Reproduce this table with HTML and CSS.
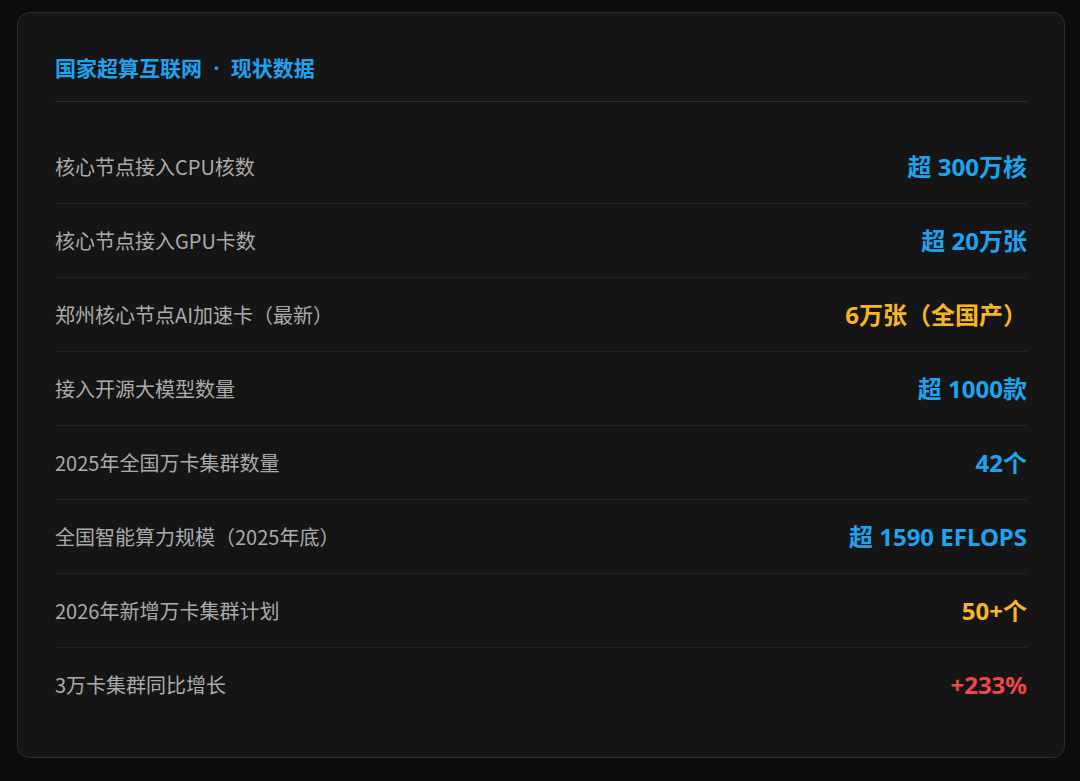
FILE: index.html
```html
<!DOCTYPE html>
<html lang="zh-CN">
<head>
<meta charset="utf-8">
<title>国家超算互联网 · 现状数据</title>
<link rel="stylesheet" href="styles.css">
</head>
<body>
<div class="card">
  <div class="header">
    <h2 class="title">国家超算互联网 · 现状数据</h2>
  </div>
  <ul class="list">
    <li class="row"><span class="label">核心节点接入CPU核数</span><span class="value blue">超 300万核</span></li>
    <li class="row"><span class="label">核心节点接入GPU卡数</span><span class="value blue">超 20万张</span></li>
    <li class="row"><span class="label">郑州核心节点AI加速卡（最新）</span><span class="value gold">6万张（全国产）</span></li>
    <li class="row"><span class="label">接入开源大模型数量</span><span class="value blue">超 1000款</span></li>
    <li class="row"><span class="label">2025年全国万卡集群数量</span><span class="value blue">42个</span></li>
    <li class="row"><span class="label">全国智能算力规模（2025年底）</span><span class="value blue">超 1590 EFLOPS</span></li>
    <li class="row"><span class="label">2026年新增万卡集群计划</span><span class="value gold">50+个</span></li>
    <li class="row"><span class="label">3万卡集群同比增长</span><span class="value red">+233%</span></li>
  </ul>
</div>
</body>
</html>
```
FILE: styles.css
```css
html, body {
  margin: 0;
  background: #0c0c0c;
}
body {
  padding: 12px 15px 22px 17px;
  font-family: "Noto Sans CJK SC", "Noto Sans", sans-serif;
}
.card {
  box-sizing: border-box;
  width: 1048px;
  background: #151515;
  border: 1px solid #2c2c2c;
  border-radius: 12px;
  padding: 36px 37px 36px 37px;
}
.header {
  padding: 4px 0 18px;
  border-bottom: 1px solid #173447;
}
.title {
  margin: 0;
  font-family: "Noto Sans", "Noto Sans CJK SC", sans-serif;
  font-size: 21px;
  line-height: 30px;
  font-weight: 700;
  color: #1ea3ef;
  word-spacing: 6px;
}
.list {
  list-style: none;
  margin: 28px 0 0;
  padding: 0;
}
.row {
  display: flex;
  justify-content: space-between;
  align-items: center;
  padding: 24px 0;
  line-height: 25px;
  border-bottom: 1px solid #242424;
}
.row:last-child {
  border-bottom: none;
}
.label {
  font-size: 20px;
  color: #ababab;
}
.value {
  font-family: "Noto Sans", "Noto Sans CJK SC", sans-serif;
  font-size: 24px;
  font-weight: 700;
}
.blue { color: #1ea3ef; }
.gold { color: #f6b722; }
.red { color: #f04848; }
```
